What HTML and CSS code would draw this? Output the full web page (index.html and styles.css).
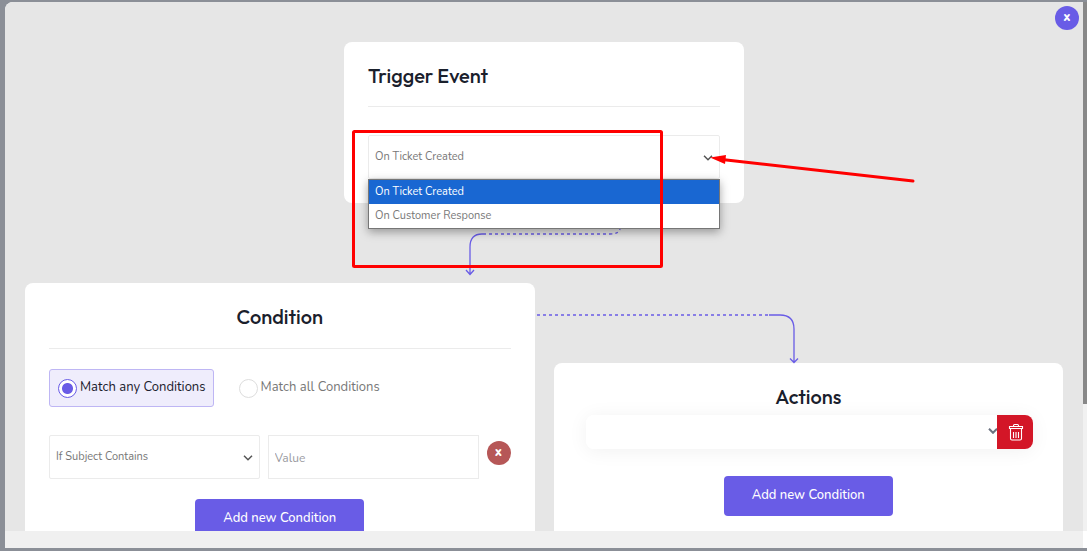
FILE: index.html
```html
<!DOCTYPE html>
<html lang="en">
<head>
<meta charset="utf-8">
<title>Automation workflow</title>
<link rel="stylesheet" href="styles.css">
</head>
<body>
<main class="modal">
  <div class="view">
    <div class="canvas">
      <button class="round close" type="button" aria-label="Close">x</button>

      <section class="trigger">
        <div class="card">
          <h2 class="title">Trigger Event</h2>
          <div class="picker">
            <select class="field" aria-label="Trigger event">
              <option>On Ticket Created</option>
              <option>On Customer Response</option>
            </select>
            <svg class="chevron" viewBox="0 0 10 6"><path d="M1 .8 5 4.8 9 .8"/></svg>
            <ul class="menu">
              <li class="item active">On Ticket Created</li>
              <li class="item">On Customer Response</li>
            </ul>
          </div>
        </div>
        <svg class="link link-down" viewBox="0 0 160 52">
          <path class="dashes" d="M18 10H145Q154 10 155 5"/>
          <path d="M18 10H17Q5 10 5 23V50M1 46 5 50.500 9 46"/>
        </svg>
        <svg class="marks" viewBox="0 0 580 240">
          <rect x="9.500" y="89.500" width="308" height="135" rx="1"/>
          <path d="M569 139 378 117.500"/>
          <path class="head" d="M366 115.500 382 113 381 122Z"/>
        </svg>
      </section>

      <div class="columns">
        <section class="card">
          <h2 class="title centered">Condition</h2>
          <div class="modes">
            <label class="mode selected"><input class="radio" type="radio" name="mode" checked>Match any Conditions</label>
            <label class="mode"><input class="radio" type="radio" name="mode">Match all Conditions</label>
          </div>
          <div class="rule">
            <div class="picker">
              <select class="field" aria-label="Condition type"><option>If Subject Contains</option></select>
              <svg class="chevron" viewBox="0 0 10 6"><path d="M1 .8 5 4.8 9 .8"/></svg>
            </div>
            <input class="field value" type="text" placeholder="Value" aria-label="Value">
            <button class="round remove" type="button" aria-label="Remove condition">x</button>
          </div>
          <button class="add" type="button">Add new Condition</button>
        </section>

        <section class="actions">
          <svg class="link link-side" viewBox="0 0 266 52">
            <path class="dashes" d="M2 3H234"/>
            <path d="M234 3H245Q259 3 259 17V50M255 46.500 259 50.500 263 46.500"/>
          </svg>
          <div class="card">
            <h2 class="title centered plain">Actions</h2>
            <div class="action">
              <div class="picker">
                <select class="field soft" aria-label="Action"><option></option></select>
                <svg class="chevron bold" viewBox="0 0 10 6"><path d="M1 .8 5 4.800 9 .8"/></svg>
              </div>
              <button class="trash" type="button" aria-label="Delete action">
                <svg viewBox="0 0 16 18"><path d="M1.500 3.500h13v2h-13zM2.500 5.500h11v10q0 1.500-1.500 1.500h-8q-1.500 0-1.500-1.500zM5.500 3.500v-1q0-1 1-1h3q1 0 1 1v1M5.500 9v6M8 9v6M10.500 9v6"/></svg>
              </button>
            </div>
            <button class="add" type="button">Add new Condition</button>
          </div>
        </section>
      </div>
    </div>
    <div class="track"><div class="thumb"></div></div>
  </div>
  <div class="bottom-bar"></div>
</main>
</body>
</html>
```
FILE: styles.css
```css
* { box-sizing: border-box; }
body {
  margin: 0;
  height: 100vh;
  padding: 2px 0 3px 5px;
  overflow: hidden;
  background: #8b8f97;
  font-family: Nunito, "Open Sans", sans-serif;
  font-size: 11px;
  color: #777;
}
button, input, select { font: inherit; color: inherit; margin: 0; }
button { border: 0; padding: 0; cursor: pointer; }

.modal {
  display: flex;
  flex-direction: column;
  height: 100%;
  overflow: hidden;
  background: #fff;
  border-radius: 8px 0 0 0;
}
.view { display: flex; flex: 1; min-height: 0; }
.canvas {
  position: relative;
  flex: 1;
  padding: 40px 20px 0;
  overflow: hidden;
  background: #e6e6e6;
}
.track { width: 4px; background: #f1f1f1; }
.thumb { height: 76%; background: #888; }
.bottom-bar { height: 17px; margin-right: 4px; background: #f0f0f0; }

.card { padding: 24px; background: #fff; border-radius: 8px; }
.title {
  margin: 0 0 28px;
  padding-bottom: 20px;
  border-bottom: 1px solid #ebebeb;
  font-family: Outfit, Lato, sans-serif;
  font-size: 20px;
  line-height: 20px;
  font-weight: 500;
  color: #1a202c;
}
.centered { margin-bottom: 20px; padding-bottom: 21px; text-align: center; }
.plain { margin-bottom: 8px; padding: 0; border: 0; }

.trigger { position: relative; width: 400px; margin: 0 auto 80px; }
.picker { position: relative; }
.field {
  display: block;
  width: 100%;
  height: 44px;
  padding: 0 6px 1px;
  border: 1px solid #ebebeb;
  border-radius: 2px;
  background: #fff;
  appearance: none;
  outline: 0;
}
.chevron {
  position: absolute;
  right: 7px;
  top: 20px;
  width: 10px;
  height: 6px;
  fill: none;
  stroke: #555;
  stroke-width: 1.5;
}
.menu {
  position: absolute;
  z-index: 2;
  top: 100%;
  left: 0;
  right: 0;
  margin: 0;
  padding: 0;
  list-style: none;
  background: #fff;
  border: 1px solid #767676;
  box-shadow: 0 3px 9px rgba(0, 0, 0, .35);
}
.item { padding: 0 6px; line-height: 24px; }
.active { background: #1967d2; color: #fff; }

.link { position: absolute; fill: none; stroke: #695ce6; stroke-width: 1.3; }
.dashes { stroke-dasharray: 3 3; }
.link-down { left: 121px; top: 182px; width: 160px; height: 52px; }
.link-side { left: -19px; top: -51px; width: 266px; height: 52px; }
.marks {
  position: absolute;
  z-index: 3;
  left: 0;
  top: 0;
  width: 580px;
  height: 240px;
  fill: none;
  stroke: #f00;
  stroke-width: 3;
  stroke-linecap: round;
  pointer-events: none;
}
.head { fill: #f00; stroke: none; }

.columns {
  display: grid;
  grid-template-columns: 1fr 1fr;
  gap: 19px;
}
.modes { display: flex; gap: 16px; margin-bottom: 28px; font-size: 13px; }
.mode {
  display: flex;
  align-items: center;
  gap: 3px;
  height: 38px;
  padding: 0 7px 2px 8px;
  border: 1px solid transparent;
  border-radius: 3px;
}
.selected { background: #efedfc; border-color: #beb6f4; color: #1a202c; }
.radio {
  appearance: none;
  width: 19px;
  height: 19px;
  margin-top: 3px;
  border: 1px solid #ddd;
  border-radius: 50%;
  background: #fff;
}
.radio:checked {
  border-color: #695ce6;
  background: radial-gradient(circle, #695ce6 5px, #fff 6px);
}
.rule {
  display: grid;
  grid-template-columns: 1fr 1fr 24px;
  gap: 8px;
  margin-bottom: 20px;
}
.value { padding: 2px 6px 0; border-radius: 0; font-size: 12px; }
.value::placeholder { color: #9a9a9f; }
.round {
  width: 24px;
  height: 24px;
  padding-bottom: 2px;
  border-radius: 50%;
  color: #fff;
  font-size: 13px;
  line-height: 20px;
  font-weight: 800;
}
.close { position: absolute; top: 4px; right: 4px; background: #695ce6; }
.remove { margin-top: 6px; background: #b65757; }
.add {
  display: block;
  width: 169px;
  height: 40px;
  margin: 0 auto;
  padding-bottom: 2px;
  border-radius: 4px;
  background: #695ce6;
  color: #fff;
  font-size: 13px;
  font-weight: 500;
}
.actions { position: relative; margin-top: 80px; }
.actions .card { min-height: 200px; }
.link-side { z-index: 1; }
.action {
  display: flex;
  margin: 0 6px 27px 8px;
  border-radius: 8px;
  box-shadow: 0 2px 20px rgba(0, 0, 0, .06);
}
.action .picker { flex: 1; }
.soft { height: 34px; border: 0; border-radius: 8px 0 0 8px; }
.bold { right: -1px; top: 13px; stroke: #6b7280; stroke-width: 2; }
.trash {
  position: relative;
  display: grid;
  place-items: center;
  width: 36px;
  height: 34px;
  padding-left: 2px;
  border-radius: 0 8px 8px 0;
  background: #d31627;
}
.trash svg { width: 16px; height: 18px; fill: none; stroke: #fff; stroke-width: 1.1; }
```
